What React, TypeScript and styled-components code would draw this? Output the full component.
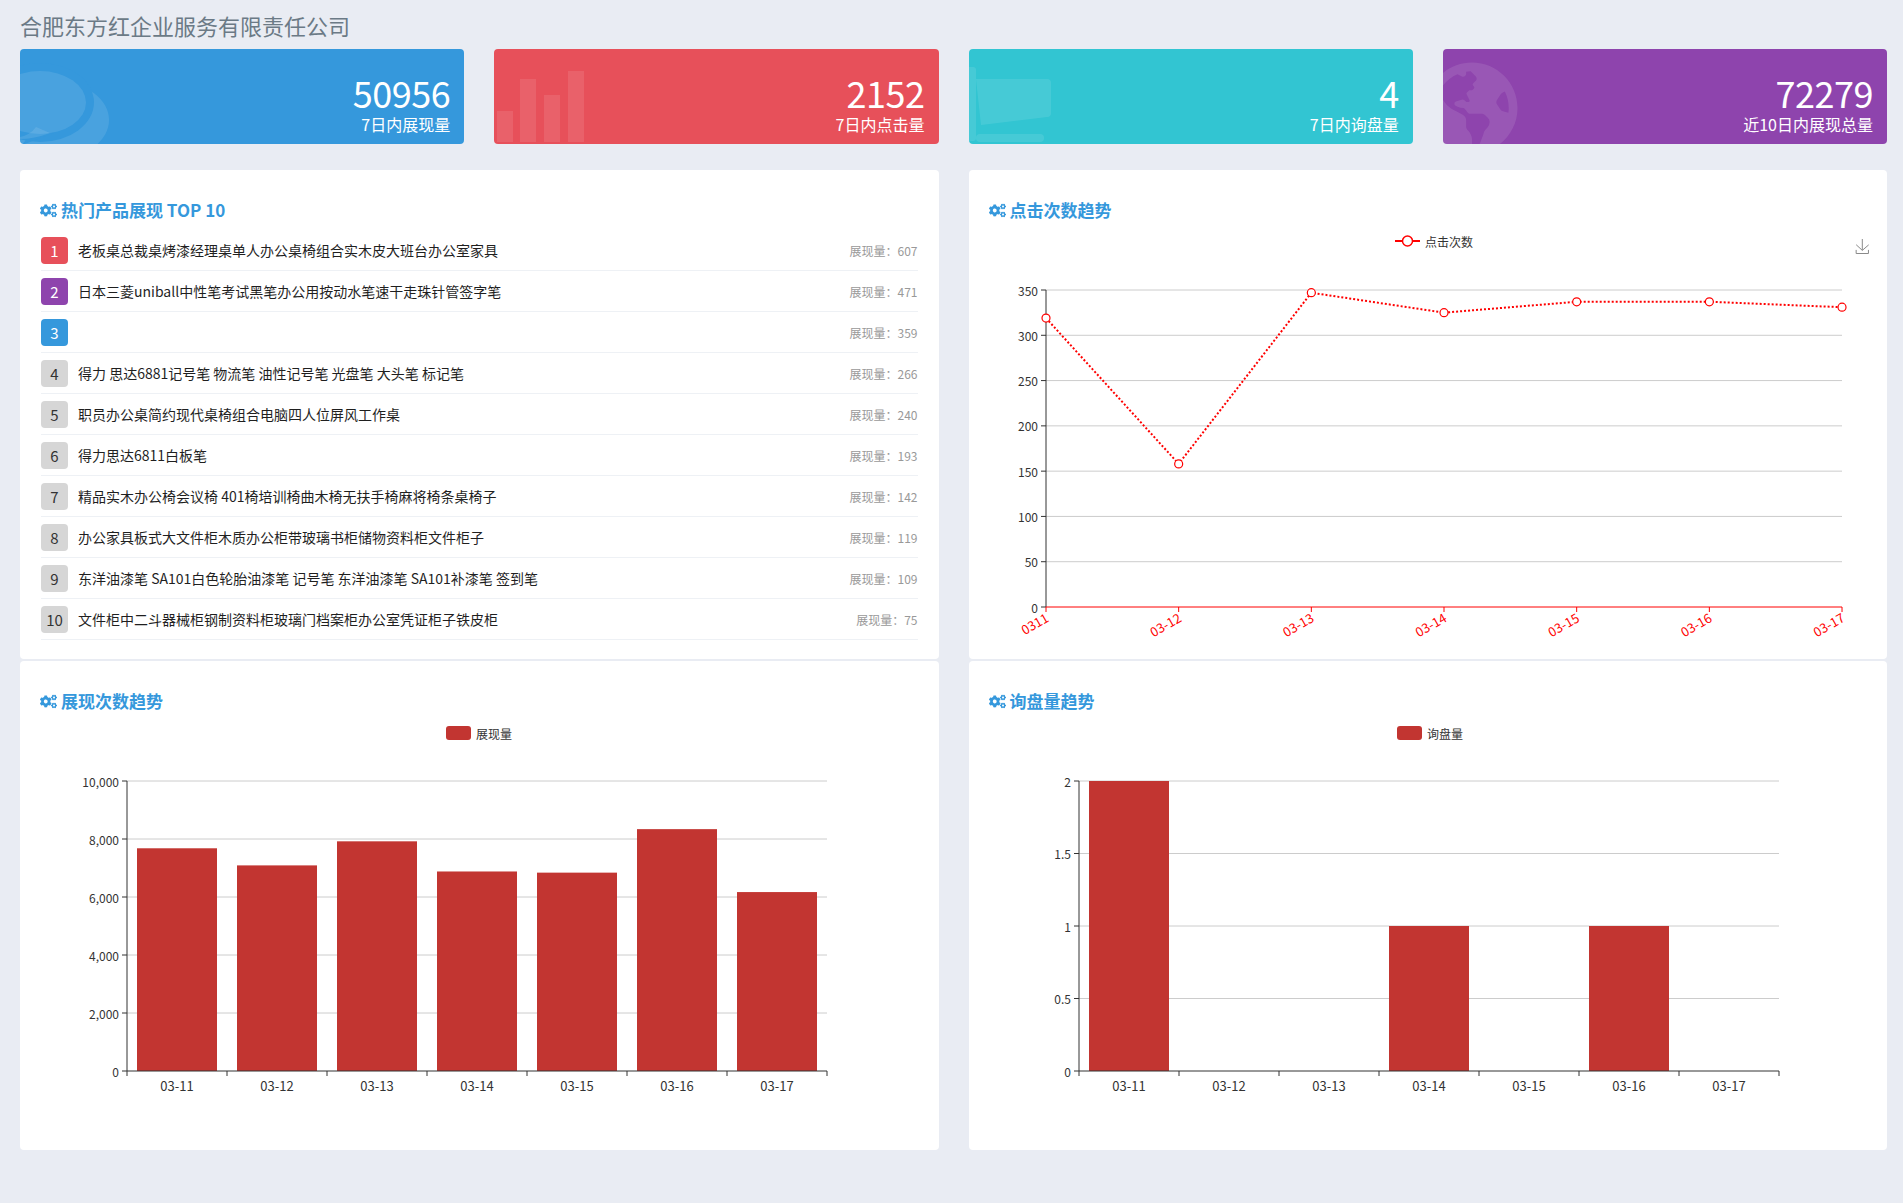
import React from 'react';
import styled, { createGlobalStyle } from 'styled-components';
import { FaCogs, FaGlobeAmericas } from 'react-icons/fa';

const GlobalStyle = createGlobalStyle`
  html, body {
    margin: 0;
    padding: 0;
    background: #e9ecf3;
    font-family: "Noto Sans CJK SC", "Noto Sans", sans-serif;
  }
  * { box-sizing: border-box; }
`;

const Page = styled.div`
  padding: 10px 16px 53px 20px;
`;

const CompanyTitle = styled.h1`
  margin: 0;
  font-size: 22px;
  line-height: 30px;
  font-weight: 400;
  color: #6b7a86;
`;

const StatGrid = styled.div`
  display: grid;
  grid-template-columns: repeat(4, 1fr);
  gap: 30px;
  margin-top: 9px;
`;

const StatCard = styled.div<{ $bg: string }>`
  position: relative;
  overflow: hidden;
  height: 95px;
  border-radius: 4px;
  background: ${(p) => p.$bg};
  color: #fff;
`;

const StatVisual = styled.div`
  position: absolute;
  inset: 0;
  pointer-events: none;
  svg.deco { display: block; }
`;

const GlobeWrap = styled.div`
  position: absolute;
  left: -18px;
  top: 12px;
  color: rgba(255, 255, 255, 0.1);
  line-height: 0;
`;

const StatDetails = styled.div`
  position: relative;
  display: flex;
  flex-direction: column;
  align-items: flex-end;
  padding: 28px 14px 0 0;
`;

const StatNumber = styled.div`
  font-size: 36px;
  line-height: 30px;
  height: 30px;
  font-weight: 400;
  letter-spacing: -0.5px;
`;

const StatDesc = styled.div`
  margin-top: 9px;
  font-size: 16px;
  line-height: 16px;
`;

const PanelGrid = styled.div`
  display: grid;
  grid-template-columns: 1fr 1fr;
  column-gap: 30px;
  row-gap: 2px;
  margin-top: 26px;
`;

const Panel = styled.section`
  height: 489px;
  background: #fff;
  border-radius: 4px;
  overflow: hidden;
`;

const PanelTitle = styled.div`
  display: flex;
  align-items: center;
  gap: 4px;
  padding: 28px 20px 0 20px;
  height: 52px;
  font-size: 17px;
  line-height: 24px;
  font-weight: 700;
  color: #3598dc;
`;

const HotList = styled.ul`
  list-style: none;
  margin: 0;
  padding: 8px 21px 0 21px;
`;

const HotRow = styled.li`
  display: flex;
  align-items: center;
  gap: 10px;
  height: 41px;
  border-bottom: 1px solid #eef1f5;
`;

const RankBadge = styled.span<{ $bg: string; $fg: string }>`
  flex: none;
  width: 27px;
  height: 27px;
  border-radius: 4px;
  background: ${(p) => p.$bg};
  color: ${(p) => p.$fg};
  font-size: 15px;
  line-height: 27px;
  text-align: center;
`;

const HotName = styled.span`
  flex: 1;
  min-width: 0;
  font-size: 14px;
  color: #1f1f1f;
  white-space: nowrap;
  overflow: hidden;
  text-overflow: ellipsis;
`;

const HotCount = styled.span`
  flex: none;
  font-size: 12px;
  color: #999;
`;

const ChartSvg = styled.svg`
  display: block;
  width: 100%;
  height: 437px;
  font-family: "Noto Sans CJK SC", "Noto Sans", sans-serif;
  font-size: 12px;
  .cat { font-size: 13px; }
`;

const hotItems: { name: string; count: number }[] = [
  { name: '老板桌总裁桌烤漆经理桌单人办公桌椅组合实木皮大班台办公室家具', count: 607 },
  { name: '日本三菱uniball中性笔考试黑笔办公用按动水笔速干走珠针管签字笔', count: 471 },
  { name: '', count: 359 },
  { name: '得力 思达6881记号笔 物流笔 油性记号笔 光盘笔 大头笔 标记笔', count: 266 },
  { name: '职员办公桌简约现代桌椅组合电脑四人位屏风工作桌', count: 240 },
  { name: '得力思达6811白板笔', count: 193 },
  { name: '精品实木办公椅会议椅 401椅培训椅曲木椅无扶手椅麻将椅条桌椅子', count: 142 },
  { name: '办公家具板式大文件柜木质办公柜带玻璃书柜储物资料柜文件柜子', count: 119 },
  { name: '东洋油漆笔 SA101白色轮胎油漆笔 记号笔 东洋油漆笔 SA101补漆笔 签到笔', count: 109 },
  { name: '文件柜中二斗器械柜钢制资料柜玻璃门档案柜办公室凭证柜子铁皮柜', count: 75 },
];

const badgeColors = ['#e7505a', '#8e44ad', '#3598dc'];

const dates = ['03-11', '03-12', '03-13', '03-14', '03-15', '03-16', '03-17'];

const W = 'rgba(255,255,255,0.1)';

function CommentsDeco() {
  return (
    <svg className="deco" width="100%" height="95">
      <ellipse cx={38} cy={71} rx={51} ry={38} fill={W} />
      <ellipse cx={20} cy={53.5} rx={54} ry={39.5} fill="#3598dc" />
      <path d="M2 96 L14 80 L34 84 Z" fill="#3598dc" />
      <ellipse cx={20} cy={53.5} rx={46} ry={31.5} fill={W} />
      <path d="M0 88 Q10 86 16 78 L30 84 Q14 90 0 90 Z" fill={W} />
    </svg>
  );
}

function BarsDeco() {
  const bars = [
    { x: 3, top: 62 },
    { x: 26, top: 30 },
    { x: 50, top: 46 },
    { x: 74, top: 22 },
  ];
  return (
    <svg className="deco" width="100%" height="95">
      {bars.map((b) => (
        <rect key={b.x} x={b.x} y={b.top} width={16} height={93 - b.top} fill={W} />
      ))}
    </svg>
  );
}

function CartDeco() {
  return (
    <svg className="deco" width="100%" height="95">
      <rect x={-4} y={18} width={11} height={74} rx={3} fill={W} />
      <path d="M7 30 H78 Q82 30 82 34 V64 Q82 68 78 68 L12 76 Z" fill={W} />
      <rect x={7} y={85} width={68} height={8} rx={4} fill={W} />
    </svg>
  );
}

const stats = [
  { bg: '#3598dc', num: '50956', desc: '7日内展现量', deco: <CommentsDeco /> },
  { bg: '#e7505a', num: '2152', desc: '7日内点击量', deco: <BarsDeco /> },
  { bg: '#32c5d2', num: '4', desc: '7日内询盘量', deco: <CartDeco /> },
  {
    bg: '#8e44ad',
    num: '72279',
    desc: '近10日内展现总量',
    deco: (
      <GlobeWrap>
        <FaGlobeAmericas size={94} />
      </GlobeWrap>
    ),
  },
];

function LineChart() {
  const values = [319, 158, 347, 325, 337, 337, 331];
  const x0 = 77;
  const step = 132.67;
  const yOf = (v: number) => 385 - v * 0.9057;
  const ticks = [0, 50, 100, 150, 200, 250, 300, 350];
  const xEnd = x0 + step * 6;
  const pts = values.map((v, i) => `${x0 + i * step},${yOf(v)}`).join(' ');
  const labels = ['0311', '03-12', '03-13', '03-14', '03-15', '03-16', '03-17'];
  return (
    <ChartSvg>
      <line x1={426} y1={19} x2={451} y2={19} stroke="#f00" strokeWidth={2} />
      <circle cx={438.5} cy={19} r={5} fill="#fff" stroke="#f00" strokeWidth={1.5} />
      <text x={456} y={19} dominantBaseline="central" fill="#333">点击次数</text>
      <g transform="translate(886,17) scale(0.25)" fill="none" stroke="#8a8a8a" strokeWidth={4}>
        <path d="M4.7 22.9 L29.3 45.5 L54.7 23.4 M4.6 43.6 L4.6 58 L53.8 58 L53.8 43.6 M29.2 45.1 L29.2 0" />
      </g>
      {ticks.map((t) => (
        <g key={t}>
          {t > 0 && <line x1={x0} x2={xEnd} y1={yOf(t)} y2={yOf(t)} stroke="#ccc" strokeWidth={1} />}
          <line x1={x0 - 5} x2={x0} y1={yOf(t)} y2={yOf(t)} stroke="#333" strokeWidth={1} />
          <text x={x0 - 8} y={yOf(t)} textAnchor="end" dominantBaseline="central" fill="#333">
            {t}
          </text>
        </g>
      ))}
      <line x1={x0} x2={x0} y1={yOf(350)} y2={385} stroke="#333" strokeWidth={1} />
      <line x1={x0} x2={xEnd} y1={385} y2={385} stroke="#f00" strokeWidth={1} />
      {labels.map((l, i) => {
        const x = x0 + i * step;
        return (
          <g key={l}>
            <line x1={x} x2={x} y1={385} y2={390} stroke="#f00" strokeWidth={1} />
            <text
              className="cat"
              x={x + 1}
              y={394}
              textAnchor="end"
              dominantBaseline="central"
              fill="#f00"
              transform={`rotate(-30 ${x + 1} 394)`}
            >
              {l}
            </text>
          </g>
        );
      })}
      <polyline points={pts} fill="none" stroke="#f00" strokeWidth={2} strokeDasharray="2 2" />
      {values.map((v, i) => (
        <circle key={i} cx={x0 + i * step} cy={yOf(v)} r={4} fill="#fff" stroke="#f00" strokeWidth={1.2} />
      ))}
    </ChartSvg>
  );
}

function BarChart(props: {
  axisX: number;
  max: number;
  tickStep: number;
  values: number[];
  legend: string;
  legendX: number;
  format: (v: number) => string;
}) {
  const { axisX, max, tickStep, values, legend, legendX, format } = props;
  const top = 68;
  const bottom = 358;
  const yOf = (v: number) => bottom - (v / max) * (bottom - top);
  const ticks: number[] = [];
  for (let t = 0; t <= max + 1e-9; t += tickStep) ticks.push(t);
  const xEnd = axisX + 700;
  return (
    <ChartSvg>
      <rect x={legendX} y={13} width={25} height={14} rx={3} fill="#c23531" />
      <text x={legendX + 30} y={20} dominantBaseline="central" fill="#333">
        {legend}
      </text>
      {ticks.map((t) => (
        <g key={t}>
          {t > 0 && <line x1={axisX} x2={xEnd} y1={yOf(t)} y2={yOf(t)} stroke="#ccc" strokeWidth={1} />}
          <line x1={axisX - 5} x2={axisX} y1={yOf(t)} y2={yOf(t)} stroke="#333" strokeWidth={1} />
          <text x={axisX - 8} y={yOf(t)} textAnchor="end" dominantBaseline="central" fill="#333">
            {format(t)}
          </text>
        </g>
      ))}
      {values.map((v, i) =>
        v > 0 ? (
          <rect key={i} x={axisX + i * 100 + 10} y={yOf(v)} width={80} height={bottom - yOf(v)} fill="#c23531" />
        ) : null
      )}
      <line x1={axisX} x2={axisX} y1={top} y2={bottom} stroke="#333" strokeWidth={1} />
      <line x1={axisX} x2={xEnd} y1={bottom} y2={bottom} stroke="#333" strokeWidth={1} />
      {Array.from({ length: 8 }).map((_, i) => (
        <line key={i} x1={axisX + i * 100} x2={axisX + i * 100} y1={bottom} y2={bottom + 5} stroke="#333" strokeWidth={1} />
      ))}
      {dates.map((d, i) => (
        <text
          key={d}
          className="cat"
          x={axisX + i * 100 + 50}
          y={372}
          textAnchor="middle"
          dominantBaseline="central"
          fill="#333"
        >
          {d}
        </text>
      ))}
    </ChartSvg>
  );
}

function TitleBar({ children }: { children: React.ReactNode }) {
  return (
    <PanelTitle>
      <FaCogs size={17} />
      <span>{children}</span>
    </PanelTitle>
  );
}

export default function App() {
  return (
    <Page>
      <GlobalStyle />
      <CompanyTitle>合肥东方红企业服务有限责任公司</CompanyTitle>
      <StatGrid>
        {stats.map((s) => (
          <StatCard key={s.desc} $bg={s.bg}>
            <StatVisual>{s.deco}</StatVisual>
            <StatDetails>
              <StatNumber>{s.num}</StatNumber>
              <StatDesc>{s.desc}</StatDesc>
            </StatDetails>
          </StatCard>
        ))}
      </StatGrid>
      <PanelGrid>
        <Panel>
          <TitleBar>热门产品展现 TOP 10</TitleBar>
          <HotList>
            {hotItems.map((item, i) => (
              <HotRow key={i}>
                <RankBadge $bg={i < 3 ? badgeColors[i] : '#d6d6d6'} $fg={i < 3 ? '#fff' : '#333'}>
                  {i + 1}
                </RankBadge>
                <HotName>{item.name}</HotName>
                <HotCount>展现量：{item.count}</HotCount>
              </HotRow>
            ))}
          </HotList>
        </Panel>
        <Panel>
          <TitleBar>点击次数趋势</TitleBar>
          <LineChart />
        </Panel>
        <Panel>
          <TitleBar>展现次数趋势</TitleBar>
          <BarChart
            axisX={107}
            max={10000}
            tickStep={2000}
            values={[7680, 7090, 7920, 6880, 6840, 8340, 6170]}
            legend="展现量"
            legendX={426}
            format={(v) => v.toLocaleString('en-US')}
          />
        </Panel>
        <Panel>
          <TitleBar>询盘量趋势</TitleBar>
          <BarChart
            axisX={110}
            max={2}
            tickStep={0.5}
            values={[2, 0, 0, 1, 0, 1, 0]}
            legend="询盘量"
            legendX={428}
            format={(v) => String(v)}
          />
        </Panel>
      </PanelGrid>
    </Page>
  );
}
